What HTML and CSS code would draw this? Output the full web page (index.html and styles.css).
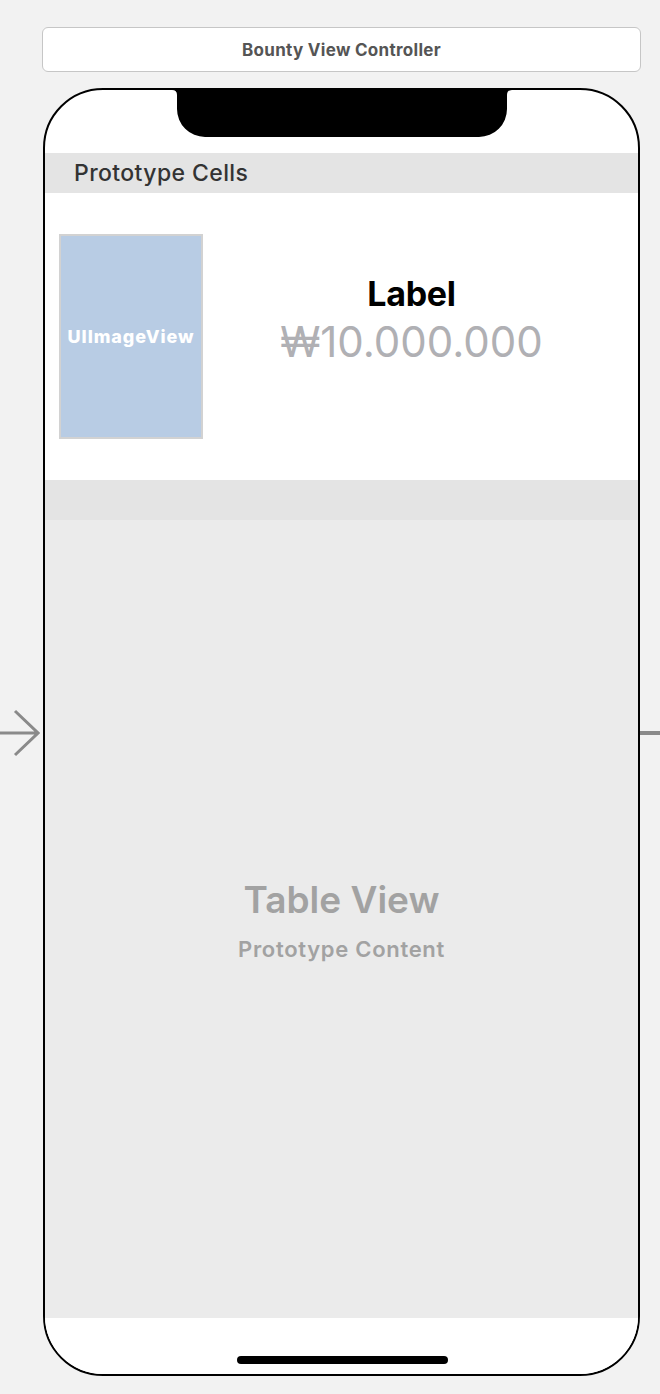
FILE: index.html
```html
<!DOCTYPE html>
<html>
<head>
<meta charset="utf-8">
<link rel="stylesheet" href="styles.css">
</head>
<body>
<div class="canvas">
  <div class="title-bar">Bounty View Controller</div>
  <div class="phone">
    <div class="top-area">
      <svg class="notch" width="340" height="47" viewBox="0 0 340 47">
        <path d="M0,0 H340 Q335,0 335,5 V19 A28,28 0 0 1 307,47 H33 A28,28 0 0 1 5,19 V5 Q5,0 0,0 Z" fill="#000"/>
      </svg>
    </div>
    <div class="section-header">Prototype Cells</div>
    <div class="cell">
      <div class="image-view">UIImageView</div>
      <div class="cell-text">
        <div class="cell-label">Label</div>
        <div class="cell-price">₩10.000.000</div>
      </div>
    </div>
    <div class="separator"></div>
    <div class="table-area">
      <div class="table-title">Table View</div>
      <div class="table-sub">Prototype Content</div>
    </div>
    <div class="bottom-area">
      <div class="home-indicator"></div>
    </div>
  </div>
  <svg class="arrow-left" width="40" height="50" viewBox="0 0 40 50">
    <path d="M0,24 H38 M15,2 L38,24 L15,46" stroke="#8a8a8a" stroke-width="3" fill="none"/>
  </svg>
  <div class="arrow-right"></div>
</div>
</body>
</html>
```
FILE: styles.css
```css
html, body {
  margin: 0;
  padding: 0;
  background: #f2f2f2;
}
body {
  font-family: Inter, "Noto Sans", "Liberation Sans", sans-serif;
}
.canvas {
  position: relative;
  width: 660px;
  height: 1394px;
  padding-top: 27px;
  box-sizing: border-box;
}
.title-bar {
  margin-left: 42px;
  width: 599px;
  height: 45px;
  box-sizing: border-box;
  border: 1px solid #c6c6c6;
  border-radius: 6px;
  background: #fff;
  display: flex;
  align-items: center;
  justify-content: center;
  font-size: 17px;
  font-weight: 700;
  color: #555;
  letter-spacing: 0.3px;
}
.phone {
  margin-top: 16px;
  margin-left: 43px;
  width: 597px;
  height: 1288px;
  box-sizing: border-box;
  border: 2px solid #000;
  border-radius: 60px;
  overflow: hidden;
  background: #fff;
  display: flex;
  flex-direction: column;
}
.top-area {
  height: 63px;
  display: flex;
  justify-content: center;
  flex-shrink: 0;
}
.notch {
  display: block;
  margin-left: 1px;
}
.section-header {
  height: 40px;
  flex-shrink: 0;
  background: #e4e4e4;
  display: flex;
  align-items: center;
  padding-left: 29px;
  font-size: 23px;
  font-weight: 500;
  color: #333;
  letter-spacing: 0.4px;
}
.cell {
  height: 287px;
  flex-shrink: 0;
  background: #fff;
  display: flex;
  align-items: flex-start;
  padding: 41px 0 0 14px;
  box-sizing: border-box;
}
.image-view {
  width: 144px;
  height: 205px;
  box-sizing: border-box;
  border: 2px solid #d2d2d2;
  background: #b8cce4;
  color: #fff;
  font-weight: 800;
  font-size: 18px;
  display: flex;
  align-items: center;
  justify-content: center;
  letter-spacing: 0.9px;
}
.cell-text {
  flex: 1;
  display: flex;
  flex-direction: column;
  align-items: center;
  padding-right: 18px;
  padding-top: 39px;
}
.cell-label {
  font-size: 34px;
  font-weight: 700;
  color: #000;
  line-height: 42px;
  letter-spacing: -0.3px;
}
.cell-price {
  font-size: 42px;
  font-weight: 400;
  color: #b0b0b4;
  line-height: 50px;
  letter-spacing: 0;
  margin-top: 2px;
}
.separator {
  height: 40px;
  flex-shrink: 0;
  background: #e4e4e4;
}
.table-area {
  height: 798px;
  flex-shrink: 0;
  background: #ebebeb;
  display: flex;
  flex-direction: column;
  align-items: center;
  padding-top: 358px;
  box-sizing: border-box;
}
.table-title {
  font-size: 37px;
  font-weight: 600;
  color: #a2a2a2;
  line-height: 44px;
  letter-spacing: 0;
}
.table-sub {
  font-size: 22px;
  font-weight: 600;
  color: #a2a2a2;
  line-height: 28px;
  margin-top: 13px;
  letter-spacing: 0.7px;
}
.bottom-area {
  flex: 1;
  background: #fff;
  display: flex;
  justify-content: center;
  padding-top: 38px;
  box-sizing: border-box;
}
.home-indicator {
  width: 211px;
  height: 8px;
  border-radius: 4px;
  background: #000;
  margin-left: 1px;
}
.arrow-left {
  position: absolute;
  left: 0;
  top: 709px;
}
.arrow-right {
  position: absolute;
  left: 640px;
  top: 731px;
  width: 20px;
  height: 4px;
  background: #8a8a8a;
}
```
